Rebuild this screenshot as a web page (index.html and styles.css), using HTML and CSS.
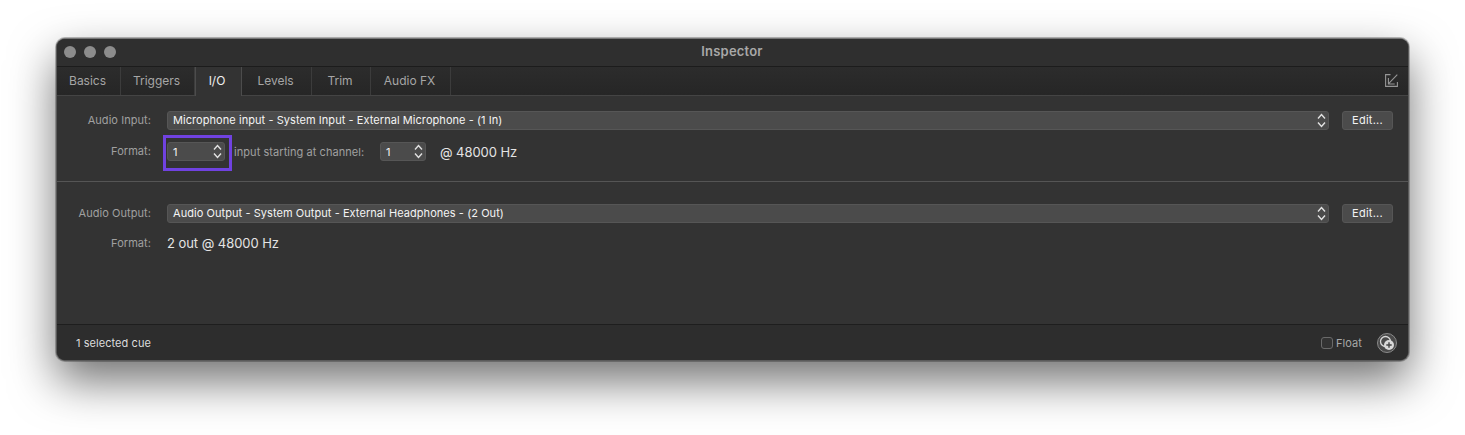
FILE: index.html
```html
<!DOCTYPE html>
<html lang="en">
  <head>
    <meta charset="UTF-8" />
    <title>Inspector</title>
    <link rel="stylesheet" href="styles.css">
  </head>
  <body>
    <div class="window">
      <div class="titlebar">
        <div class="dots"><span></span><span></span><span></span></div>
        <div class="title">Inspector</div>
      </div>
      <div class="tabs">
        <div class="tab t-basics">Basics</div>
        <div class="tab t-triggers">Triggers</div>
        <div class="tab t-io active">I/O</div>
        <div class="tab t-levels">Levels</div>
        <div class="tab t-trim">Trim</div>
        <div class="tab t-fx">Audio FX</div>
        <svg class="popout" width="13" height="13" viewBox="0 0 13 13" fill="none" stroke="#969696" stroke-width="1.1">
          <path d="M5.5 .6H.6v11.8h11.8V8" />
          <path d="M12.3 .7L3.6 9.7M3.4 4v6h6.3" />
        </svg>
      </div>
      <div class="content">
        <div class="section sec-in">
          <div class="row first">
            <div class="label">Audio Input:</div>
            <div class="select">
              <span>Microphone input - System Input - External Microphone - (1 In)</span>
              <svg class="arrows" width="9" height="15" viewBox="0 0 9 15" fill="none" stroke="#e2e2e2" stroke-width="1.4"><path d="M1 5.5l3.5-4 3.5 4M1 9.5l3.5 4 3.5-4" /></svg>
            </div>
            <div class="edit">Edit...</div>
          </div>
          <div class="row second">
            <div class="label">Format:</div>
            <div class="stepper marked">
              <span>1</span>
              <svg class="arrows" width="9" height="15" viewBox="0 0 9 15" fill="none" stroke="#e2e2e2" stroke-width="1.4"><path d="M1 5.5l3.5-4 3.5 4M1 9.5l3.5 4 3.5-4" /></svg>
            </div>
            <div class="hint">input starting at channel:</div>
            <div class="stepper small">
              <span>1</span>
              <svg class="arrows" width="9" height="15" viewBox="0 0 9 15" fill="none" stroke="#e2e2e2" stroke-width="1.4"><path d="M1 5.5l3.5-4 3.5 4M1 9.5l3.5 4 3.5-4" /></svg>
            </div>
            <div class="value rate">@ 48000 Hz</div>
          </div>
        </div>
        <div class="section sec-out">
          <div class="row first">
            <div class="label">Audio Output:</div>
            <div class="select">
              <span>Audio Output - System Output - External Headphones - (2 Out)</span>
              <svg class="arrows" width="9" height="15" viewBox="0 0 9 15" fill="none" stroke="#e2e2e2" stroke-width="1.4"><path d="M1 5.5l3.5-4 3.5 4M1 9.5l3.5 4 3.5-4" /></svg>
            </div>
            <div class="edit">Edit...</div>
          </div>
          <div class="row second">
            <div class="label">Format:</div>
            <div class="value">2 out @ 48000 Hz</div>
          </div>
        </div>
      </div>
      <div class="footer">
        <div class="status">1 selected cue</div>
        <div class="float"><span class="check"></span>Float</div>
        <div class="addbtn">
          <svg width="16" height="16" viewBox="0 0 16 16">
            <circle cx="6.5" cy="6.5" r="5" fill="none" stroke="#d8d8d8" stroke-width="1.3" />
            <circle cx="10" cy="10" r="5" fill="#d8d8d8" />
            <path d="M10 7.3v5.4M7.3 10h5.4" stroke="#444" stroke-width="1.4" />
          </svg>
        </div>
      </div>
    </div>
  </body>
</html>
```

FILE: styles.css
```css
* {
  padding: 0;
  margin: 0;
  box-sizing: border-box;
}
html,
body {
  height: 435px;
  overflow: hidden;
  background: #fff;
}
body {
  padding: 38px 56px 0;
  font-family: Inter, "Liberation Sans", sans-serif;
  font-size: 11px;
  letter-spacing: 0.06px;
  color: #e8e8e8;
}
.window {
  display: flex;
  flex-direction: column;
  width: 1353px;
  height: 323px;
  background: #333;
  border-radius: 9px;
  border: 1px solid #5a5a5a;
  border-top-color: #777;
  overflow: hidden;
  box-shadow: 0 0 0 1px rgba(0, 0, 0, 0.25), 0 20px 46px rgba(0, 0, 0, 0.56);
}
.titlebar {
  display: flex;
  align-items: center;
  justify-content: center;
  position: relative;
  height: 28px;
  flex-shrink: 0;
  padding-bottom: 3px;
  background: #2f2f2f;
  border-bottom: 1px solid #1c1c1c;
}
.dots {
  display: flex;
  gap: 8px;
  position: absolute;
  left: 7px;
  top: 7px;
}
.dots span {
  width: 12px;
  height: 12px;
  border-radius: 50%;
  background: #8c8c8c;
}
.title {
  font-size: 13px;
  font-weight: 600;
  letter-spacing: 0.2px;
  color: #a8a8a8;
  margin-right: 1px;
}

.tabs {
  display: flex;
  align-items: stretch;
  height: 29px;
  flex-shrink: 0;
  background: linear-gradient(#2c2c2c, #262626);
  border-bottom: 1px solid #444;
}
.tab {
  display: flex;
  align-items: center;
  justify-content: center;
  padding: 0 2px 2px 0;
  font-size: 12px;
  letter-spacing: -0.02px;
  color: #a6a6a6;
  border-right: 1px solid #3c3c3c;
}
.tab.active {
  padding-right: 3px;
  background: #333;
  color: #f0f0f0;
  margin-bottom: -1px;
  border-left: 1px solid #4c4c4c;
  border-right: 1px solid #4c4c4c;
}
.t-basics { width: 64px; }
.t-triggers { width: 74px; }
.t-io { width: 47px; }
.t-levels { width: 70px; }
.t-trim { width: 59px; }
.t-fx { width: 80px; }
.popout {
  margin: 7px 10px 0 auto;
}

.content {
  flex: 1;
  display: flex;
  flex-direction: column;
}
.sec-in {
  height: 86px;
  padding-top: 15px;
  border-bottom: 1px solid #555;
}
.sec-out {
  padding-top: 22px;
}
.row {
  display: flex;
  align-items: center;
  height: 19px;
  padding-left: 9px;
}
.row.second {
  margin-top: 12px;
}
.sec-out .row.second {
  margin-top: 11px;
}
.label {
  width: 85px;
  margin-right: 16px;
  padding-bottom: 1px;
  text-align: right;
  color: #a0a0a0;
}
.select,
.stepper {
  display: flex;
  align-items: center;
  justify-content: space-between;
  height: 19px;
  padding: 0 2px 0 5px;
  background: #4b4b4b;
  border: 1px solid #565656;
  border-radius: 3px;
  color: #f4f4f4;
}
.select {
  width: 1162px;
  padding-bottom: 1px;
}
.stepper {
  width: 58px;
  position: relative;
}
.stepper.small {
  width: 46px;
}
.marked::after {
  content: "";
  box-sizing: border-box;
  position: absolute;
  left: -5px;
  top: -8px;
  width: 69px;
  height: 36px;
  border: 3px solid #7042e0;
}
.hint {
  width: 146px;
  margin-left: 9px;
  color: #a0a0a0;
}
.value {
  font-size: 13px;
  letter-spacing: -0.05px;
  padding-bottom: 1px;
  color: #e4e4e4;
}
.rate {
  margin-left: 14px;
  padding-bottom: 0;
}
.edit {
  display: flex;
  align-items: center;
  justify-content: center;
  width: 51px;
  height: 19px;
  margin-left: 13px;
  padding-bottom: 1px;
  background: #4b4b4b;
  border: 1px solid #565656;
  border-radius: 3px;
  letter-spacing: 0.25px;
  color: #f4f4f4;
}

.footer {
  display: flex;
  align-items: center;
  height: 36px;
  flex-shrink: 0;
  padding: 0 11px 0 19px;
  background: #2d2d2d;
  border-top: 1px solid #1e1e1e;
}
.status {
  color: #dcdcdc;
}
.float {
  display: flex;
  align-items: center;
  gap: 3px;
  margin-left: auto;
  margin-right: 15px;
  color: #a8a8a8;
}
.check {
  width: 12px;
  height: 12px;
  border: 1px solid #6a6a6a;
  border-radius: 3px;
  background: #333;
}
.addbtn {
  display: flex;
  align-items: center;
  justify-content: center;
  width: 20px;
  height: 20px;
  border-radius: 50%;
  background: #4a4a4a;
  border: 1px solid #8a8a8a;
}
```
